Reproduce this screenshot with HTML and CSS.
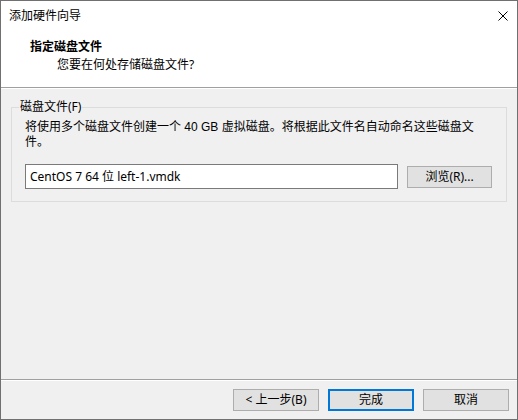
FILE: index.html
```html
<!DOCTYPE html>
<html lang="zh-CN">
<head>
<meta charset="utf-8">
<title>添加硬件向导</title>
<link rel="stylesheet" href="styles.css">
</head>
<body>
<div class="window">
  <div class="top">
    <div class="titlebar">
      <span class="title">添加硬件向导</span>
      <span class="close" aria-label="关闭">
        <svg width="10" height="10" viewBox="0 0 10 10"><path d="M0.5 0.5 L9.5 9.5 M9.5 0.5 L0.5 9.5" stroke="#000" stroke-width="1" fill="none"/></svg>
      </span>
    </div>
    <div class="header">
      <div class="h-title">指定磁盘文件</div>
      <div class="h-sub">您要在何处存储磁盘文件?</div>
    </div>
  </div>
  <div class="etch"></div>
  <div class="content">
    <fieldset class="group">
      <legend>磁盘文件(F)</legend>
      <div class="desc">
        <div class="desc-line">将使用多个磁盘文件创建一个 40 GB 虚拟磁盘。将根据此文件名自动命名这些磁盘文</div>
        <div class="desc-line">件。</div>
      </div>
      <div class="file-row">
        <div class="input">CentOS 7 64 位 left-1.vmdk</div>
        <button class="btn">浏览(R)...</button>
      </div>
    </fieldset>
  </div>
  <div class="etch"></div>
  <div class="footer">
    <button class="btn">&lt; 上一步(B)</button>
    <button class="btn default">完成</button>
    <button class="btn">取消</button>
  </div>
</div>
</body>
</html>
```

FILE: styles.css
```css
html, body {
  margin: 0;
  padding: 0;
}
body {
  font-family: "Noto Sans", "Noto Sans CJK SC", sans-serif;
  font-size: 12px;
  color: #000;
  background: #f0f0f0;
}
.window {
  width: 518px;
  height: 420px;
  box-sizing: border-box;
  border: 1px solid #707070;
  display: flex;
  flex-direction: column;
  background: #f0f0f0;
}
.top {
  background: #fff;
}
.titlebar {
  height: 30px;
  display: flex;
  align-items: center;
  justify-content: space-between;
  padding: 0 9px 0 8px;
}
.title {
  line-height: 16px;
}
.close {
  display: flex;
  width: 10px;
  height: 10px;
}
.header {
  height: 56px;
  box-sizing: border-box;
  padding: 8px 0 0 29px;
}
.h-title {
  font-weight: bold;
  line-height: 16px;
}
.h-sub {
  line-height: 16px;
  margin: 2px 0 0 27px;
}
.etch {
  height: 1px;
  background: #a0a0a0;
  border-bottom: 1px solid #fff;
}
.content {
  flex: 1;
  padding: 11px 10px 0 10px;
}
.group {
  margin: 0;
  padding: 0 14px 12px 13px;
  border: 1px solid #dcdcdc;
  min-width: 0;
}
.group legend {
  margin-left: -6px;
  padding: 0 1px;
  line-height: 14px;
}
.desc {
  margin-top: 6px;
  font-family: "Liberation Sans", "Noto Sans CJK SC", sans-serif;
}
.desc-line {
  height: 15px;
  line-height: 15px;
  white-space: nowrap;
}
.file-row {
  display: flex;
  align-items: center;
  gap: 9px;
  margin-top: 14px;
}
.input {
  width: 374px;
  height: 25px;
  box-sizing: border-box;
  border: 1px solid #7a7a7a;
  background: #fff;
  padding: 0 4px;
  line-height: 23px;
  white-space: nowrap;
}
.btn {
  font-family: inherit;
  font-size: 12px;
  color: #000;
  width: 85px;
  height: 22px;
  box-sizing: border-box;
  background: #e1e1e1;
  border: 1px solid #adadad;
  padding: 0;
  line-height: 20px;
  text-align: center;
}
.btn.default {
  border: 2px solid #0078d7;
  line-height: 18px;
}
.footer {
  height: 38px;
  box-sizing: border-box;
  display: flex;
  justify-content: flex-end;
  align-items: center;
  gap: 9px;
  padding: 0 8px 0 0;
}
.footer .btn {
  width: 86px;
}
```
